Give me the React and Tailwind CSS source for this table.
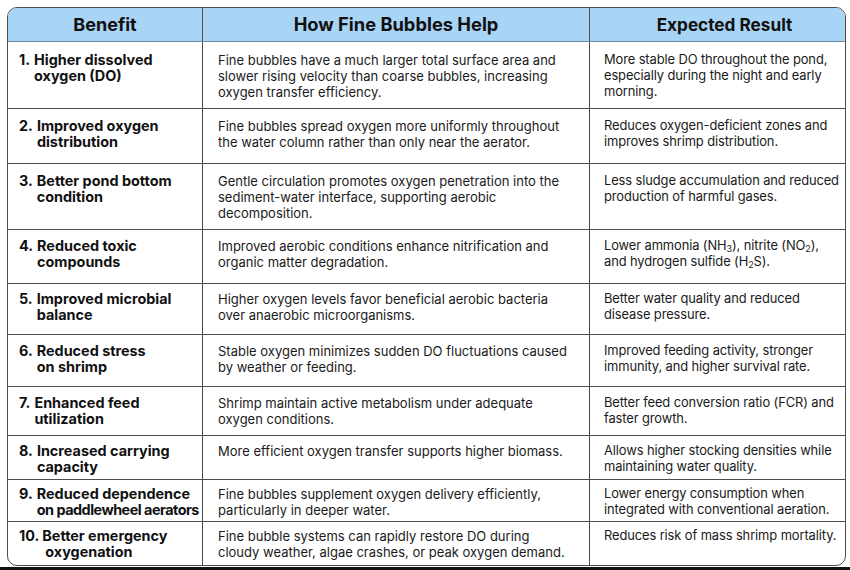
import React from "react";

const Sub = ({ children }) => (
  <sub className="text-[9px] leading-none">{children}</sub>
);

const ROWS = [
  {
    n: "1.",
    benefit: ["Higher dissolved", "oxygen (DO)"],
    how: [
      "Fine bubbles have a much larger total surface area and",
      "slower rising velocity than coarse bubbles, increasing",
      "oxygen transfer efficiency.",
    ],
    result: [
      "More stable DO throughout the pond,",
      "especially during the night and early",
      "morning.",
    ],
    h: "h-[67px]",
    pt: "pt-[10px]",
  },
  {
    n: "2.",
    benefit: ["Improved oxygen", "distribution"],
    how: [
      "Fine bubbles spread oxygen more uniformly throughout",
      "the water column rather than only near the aerator.",
    ],
    result: ["Reduces oxygen-deficient zones and", "improves shrimp distribution."],
    h: "h-[55px]",
    pt: "pt-[9px]",
  },
  {
    n: "3.",
    benefit: ["Better pond bottom", "condition"],
    how: [
      "Gentle circulation promotes oxygen penetration into the",
      "sediment-water interface, supporting aerobic",
      "decomposition.",
    ],
    result: ["Less sludge accumulation and reduced", "production of harmful gases."],
    h: "h-[66px]",
    pt: "pt-[9px]",
  },
  {
    n: "4.",
    benefit: ["Reduced toxic", "compounds"],
    how: [
      "Improved aerobic conditions enhance nitrification and",
      "organic matter degradation.",
    ],
    result: [
      <>
        Lower ammonia (NH<Sub>3</Sub>), nitrite (NO<Sub>2</Sub>),
      </>,
      <>
        and hydrogen sulfide (H<Sub>2</Sub>S).
      </>,
    ],
    h: "h-[54px]",
    pt: "pt-[8px]",
  },
  {
    n: "5.",
    benefit: ["Improved microbial", "balance"],
    how: [
      "Higher oxygen levels favor beneficial aerobic bacteria",
      "over anaerobic microorganisms.",
    ],
    result: ["Better water quality and reduced", "disease pressure."],
    h: "h-[51px]",
    pt: "pt-[7px]",
  },
  {
    n: "6.",
    benefit: ["Reduced stress", "on shrimp"],
    how: [
      "Stable oxygen minimizes sudden DO fluctuations caused",
      "by weather or feeding.",
    ],
    result: ["Improved feeding activity, stronger", "immunity, and higher survival rate."],
    h: "h-[52px]",
    pt: "pt-[8px]",
  },
  {
    n: "7.",
    benefit: ["Enhanced feed", "utilization"],
    how: ["Shrimp maintain active metabolism under adequate", "oxygen conditions."],
    result: ["Better feed conversion ratio (FCR) and", "faster growth."],
    h: "h-[49px]",
    pt: "pt-[8px]",
  },
  {
    n: "8.",
    benefit: ["Increased carrying", "capacity"],
    how: ["More efficient oxygen transfer supports higher biomass."],
    result: ["Allows higher stocking densities while", "maintaining water quality."],
    h: "h-[44px]",
    pt: "pt-[7px]",
  },
  {
    n: "9.",
    benefit: [
      "Reduced dependence",
      <span className="tracking-[-0.5px]">on paddlewheel aerators</span>,
    ],
    how: [
      "Fine bubbles supplement oxygen delivery efficiently,",
      "particularly in deeper water.",
    ],
    result: ["Lower energy consumption when", "integrated with conventional aeration."],
    h: "h-[42px]",
    pt: "pt-[6px]",
  },
  {
    n: "10.",
    benefit: ["Better emergency", <span className="ml-[3px]">oxygenation</span>],
    how: [
      "Fine bubble systems can rapidly restore DO during",
      "cloudy weather, algae crashes, or peak oxygen demand.",
    ],
    result: ["Reduces risk of mass shrimp mortality."],
    h: "h-[43px]",
    pt: "pt-[6px]",
  },
];

function Lines({ lines }) {
  return lines.map((line, i) => (
    <div key={i} className="whitespace-nowrap">
      {line}
    </div>
  ));
}

function Row({ row, last }) {
  return (
    <div
      className={`grid grid-cols-[195px_387px_1fr] ${row.h} ${
        last ? "" : "border-b border-[#4d4d4d]"
      }`}
    >
      <div
        className={`flex border-r border-[#4d4d4d] pl-[11px] ${row.pt} text-[14.4px] font-bold leading-[16px] text-[#111]`}
      >
        <span className={row.n === "10." ? "mr-[3px]" : "mr-[4px]"}>{row.n}</span>
        <div>
          <Lines lines={row.benefit} />
        </div>
      </div>
      <div
        className={`border-r border-[#4d4d4d] pl-[15px] ${row.pt} text-[13px] leading-[16px] text-[#1a1a1a]`}
      >
        <Lines lines={row.how} />
      </div>
      <div
        className={`pl-[14px] ${row.pt} text-[12.9px] leading-[16px] tracking-[-0.1px] text-[#1a1a1a]`}
      >
        <Lines lines={row.result} />
      </div>
    </div>
  );
}

export default function App() {
  return (
    <div
      className="flex h-[570px] w-[850px] flex-col bg-white"
      style={{ fontFamily: "Inter, 'Liberation Sans', sans-serif" }}
    >
      <div className="pl-[7px] pr-[4px] pt-[7px]">
        <div className="overflow-hidden rounded-[10px] border border-[#4d4d4d]">
          <div className="grid h-[34px] grid-cols-[195px_387px_1fr] border-b border-[#6f8aa0] bg-[#a8d4f6] font-bold text-[#111]">
            <div className="flex items-center justify-center border-r border-[#4d4d4d] text-[18px]">
              Benefit
            </div>
            <div className="flex items-center justify-center border-r border-[#4d4d4d] text-[18.3px]">
              How Fine Bubbles Help
            </div>
            <div className="flex items-center justify-center pl-[14px] text-[17.2px]">
              Expected Result
            </div>
          </div>
          {ROWS.map((row, i) => (
            <Row key={row.n} row={row} last={i === ROWS.length - 1} />
          ))}
        </div>
      </div>
      <div className="flex-1" />
      <div className="h-[3px] bg-[#111]" />
    </div>
  );
}
